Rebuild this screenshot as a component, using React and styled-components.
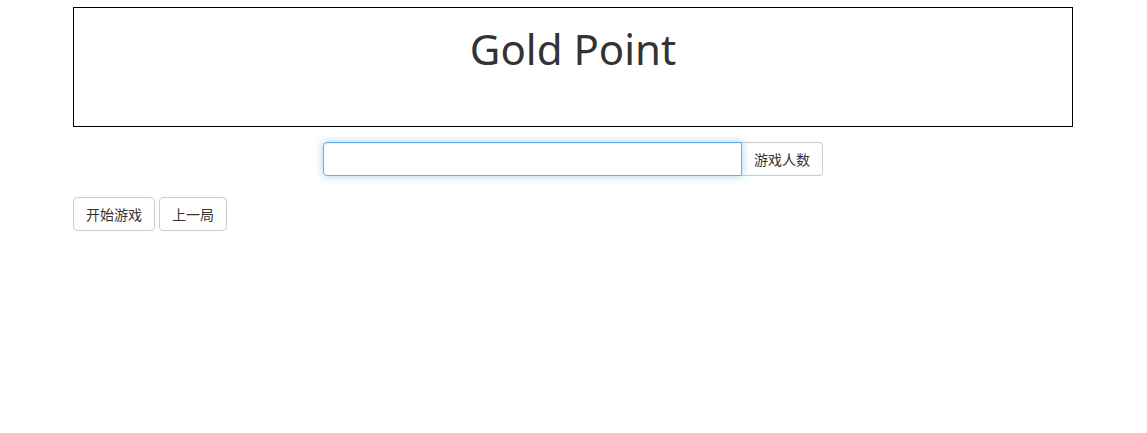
import React from "react";
import styled, { createGlobalStyle } from "styled-components";

const GlobalStyle = createGlobalStyle`
  * { box-sizing: border-box; }
  body {
    margin: 0;
    background: #fff;
    color: #333;
    font-family: "Noto Sans", "Noto Sans CJK SC", sans-serif;
    font-size: 14px;
    line-height: 1.42857;
  }
`;

const Page = styled.div`
  width: 1000px;
  margin-left: calc(50% - 500.5px);
  padding-top: 7px;
`;

const Banner = styled.div`
  height: 120px;
  border: 1px solid #000;
  text-align: center;
`;

const Title = styled.h1`
  margin: 0;
  padding-top: 18px;
  font-size: 42px;
  font-weight: 400;
  line-height: 1.1;
  color: #333;
`;

const InputRow = styled.div`
  display: flex;
  justify-content: center;
  margin-top: 15px;
`;

const InputGroup = styled.div`
  display: flex;
  width: 500px;
  height: 34px;
`;

const Field = styled.input`
  flex: 1;
  height: 34px;
  padding: 6px 12px;
  border: 1px solid #66afe9;
  border-radius: 4px 0 0 4px;
  font-size: 14px;
  font-family: inherit;
  color: #555;
  outline: none;
  box-shadow: inset 0 1px 1px rgba(0, 0, 0, 0.075), 0 0 8px rgba(102, 175, 233, 0.6);
  position: relative;
  z-index: 2;
`;

const Addon = styled.span`
  display: flex;
  align-items: center;
  justify-content: center;
  width: 81px;
  border: 1px solid #ccc;
  border-left: 0;
  border-radius: 0 4px 4px 0;
  font-size: 14px;
  font-family: "Noto Sans CJK SC", sans-serif;
  color: #333;
  background: #fff;
`;

const Actions = styled.div`
  display: flex;
  gap: 4px;
  margin-top: 21px;
`;

const Button = styled.button`
  height: 34px;
  padding: 6px 12px;
  border: 1px solid #ccc;
  border-radius: 4px;
  background: #fff;
  color: #333;
  font-size: 14px;
  font-family: "Noto Sans CJK SC", sans-serif;
  line-height: 20px;
  cursor: pointer;

  &:hover {
    background: #e6e6e6;
    border-color: #adadad;
  }
`;

export default function App() {
  return (
    <>
      <GlobalStyle />
      <Page>
        <Banner>
          <Title>Gold Point</Title>
        </Banner>
        <InputRow>
          <InputGroup>
            <Field type="text" autoFocus />
            <Addon>游戏人数</Addon>
          </InputGroup>
        </InputRow>
        <Actions>
          <Button>开始游戏</Button>
          <Button>上一局</Button>
        </Actions>
      </Page>
    </>
  );
}
